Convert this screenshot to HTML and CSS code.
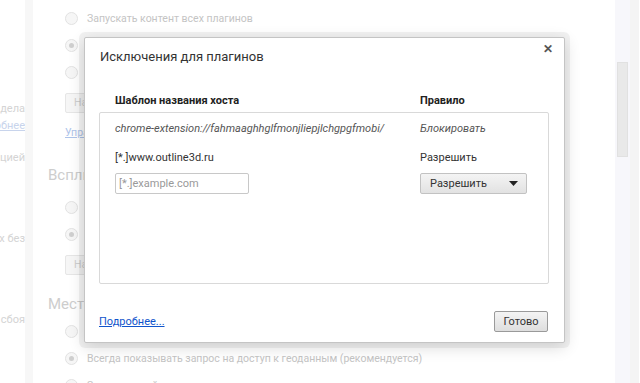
FILE: index.html
```html
<!DOCTYPE html>
<html lang="ru">
<head>
  <meta charset="UTF-8">
  <title>Настройки контента</title>
  <link rel="stylesheet" href="styles.css">
</head>
<body>

  <div class="page">
    <!-- Left column, cut by the window -->
    <div class="side">
      <div class="side-line" style="margin-top: 100px">Личные дела</div>
      <div class="side-line side-link">Подробнее</div>
      <div class="side-line" style="margin-top: 15px">геолокацией</div>
      <div class="side-line" style="margin-top: 64px">программах без</div>
      <div class="side-line" style="margin-top: 64px">в случае сбоя</div>
    </div>
    <div class="band"></div>

    <!-- Settings behind the dialog -->
    <div class="main">
      <div class="radio-row first"><span class="radio"></span>Запускать контент всех плагинов</div>
      <div class="radio-row"><span class="radio checked"></span>Нажмите, чтобы воспроизвести</div>
      <div class="radio-row"><span class="radio"></span>Блокировать все</div>
      <div class="btn-row"><span class="bg-button">Настроить исключения</span></div>
      <a class="bg-link">Управление отдельными плагинами...</a>

      <h3 class="section">Всплывающие окна</h3>
      <div class="radio-row"><span class="radio"></span>Разрешить открытие на всех сайтах</div>
      <div class="radio-row"><span class="radio checked"></span>Блокировать на всех сайтах</div>
      <div class="btn-row"><span class="bg-button">Настроить исключения</span></div>

      <h3 class="section second">Местоположение</h3>
      <div class="radio-row"><span class="radio"></span>Разрешить доступ к геоданным всем сайтам</div>
      <div class="radio-row"><span class="radio checked"></span>Всегда показывать запрос на доступ к геоданным (рекомендуется)</div>
      <div class="radio-row"><span class="radio"></span>Запретить сайтам доступ</div>
    </div>

    <div class="scrollbar">
      <div class="thumb"></div>
    </div>
    <div class="edge"></div>
  </div>

  <!-- Exceptions dialog -->
  <div class="dialog">
    <div class="dialog-head">
      <h2>Исключения для плагинов</h2>
      <span class="close">&#x2715;</span>
    </div>

    <div class="list-head">
      <span>Шаблон названия хоста</span>
      <span>Правило</span>
    </div>

    <div class="list">
      <div class="row policy">
        <span>chrome-extension://fahmaaghhglfmonjliepjlchgpgfmobi/</span>
        <span>Блокировать</span>
      </div>
      <div class="row">
        <span>[*.]www.outline3d.ru</span>
        <span>Разрешить</span>
      </div>
      <div class="row edit">
        <input class="host-input" type="text" placeholder="[*.]example.com">
        <div class="select">
          Разрешить
          <svg width="9" height="5" viewBox="0 0 9 5"><path d="M0 0h9L4.5 5z" fill="#222"/></svg>
        </div>
      </div>
    </div>

    <div class="dialog-foot">
      <a class="more">Подробнее...</a>
      <span class="done">Готово</span>
    </div>
  </div>

</body>
</html>
```

FILE: styles.css
```css
body {
  margin: 0;
  font-family: Roboto, 'Noto Sans', sans-serif;
  background: #fff;
  color: #333;
  overflow: hidden;
}

.page {
  display: flex;
  height: 383px;
  overflow: hidden;
}

/* Left column */
.side {
  width: 25px;
  overflow: hidden;
  font-size: 11px;
  color: #d4d4d4;
}

.side-line {
  display: flex;
  justify-content: flex-end;
  white-space: nowrap;
  line-height: 17px;
}

.side-link {
  color: #c8d4ec;
  text-decoration: underline;
}

.band {
  width: 8px;
  background: #f7f7f7;
}

/* Main settings */
.main {
  width: 567px;
  padding-left: 15px;
  font-size: 10.5px;
  color: #c4c4c4;
  overflow: hidden;
}

.radio-row {
  display: flex;
  align-items: center;
  height: 27px;
  padding-left: 17px;
  white-space: nowrap;
}

.radio-row.first {
  margin-top: 5px;
}

.radio {
  width: 11px;
  height: 11px;
  border: 1px solid #e2e2e2;
  border-radius: 50%;
  background: #f6f6f6;
  margin-right: 9px;
  flex: none;
  position: relative;
}

.radio.checked::after {
  content: '';
  position: absolute;
  left: 3px;
  top: 3px;
  width: 5px;
  height: 5px;
  border-radius: 50%;
  background: #cfcfcf;
}

.btn-row {
  padding: 7px 0 0 17px;
}

.bg-button {
  display: inline-block;
  height: 18px;
  line-height: 18px;
  padding: 0 8px;
  border: 1px solid #e6e6e6;
  border-radius: 2px;
  background: #f6f6f6;
  color: #cfcfcf;
}

.bg-link {
  display: block;
  margin: 12px 0 0 17px;
  line-height: 15px;
  color: #aec4ea;
  text-decoration: underline;
}

.section {
  margin: 26px 0 10px;
  font-size: 15px;
  font-weight: normal;
  color: #cdcdcd;
}

.section.second {
  margin-top: 20px;
  margin-bottom: 5px;
}

.scrollbar {
  width: 15px;
  background: #f7f7fb;
  padding-top: 62px;
}

.thumb {
  margin-left: 2px;
  width: 11px;
  height: 95px;
  background: #e9e9e9;
  border: 1px solid #e1e1e1;
  box-sizing: border-box;
}

.edge {
  width: 9px;
  background: #f4f4f4;
}

/* Dialog */
.dialog {
  position: absolute;
  left: 84px;
  top: 37px;
  width: 481px;
  height: 306px;
  box-sizing: border-box;
  background: #fff;
  border: 1px solid #c4c4c4;
  box-shadow: 0 0 0 5px rgba(0, 0, 0, 0.05), 0 4px 16px rgba(0, 0, 0, 0.16);
  border-radius: 2px;
  padding: 0 15px 0 14px;
  display: flex;
  flex-direction: column;
}

.dialog-head {
  display: flex;
  justify-content: space-between;
  align-items: flex-start;
  height: 50px;
}

.dialog-head h2 {
  margin: 11px 0 0 1px;
  font-size: 13px;
  font-weight: normal;
  color: #333;
}

.close {
  margin: 4px -4px 0 0;
  font-size: 12px;
  font-weight: bold;
  color: #555;
}

.list-head {
  display: grid;
  grid-template-columns: 305px 1fr;
  padding: 6px 0 0 16px;
  height: 18px;
  font-size: 11px;
  font-weight: bold;
  color: #222;
}

.list {
  height: 172px;
  border: 1px solid #d9d9d9;
  border-radius: 2px;
  padding: 1px 0 0 15px;
  box-sizing: border-box;
}

.row {
  display: grid;
  grid-template-columns: 305px 1fr;
  align-items: center;
  height: 29px;
  font-size: 11px;
  color: #333;
}

.row.policy {
  font-style: italic;
  color: #555;
}

.row.edit {
  height: 22px;
}

.host-input {
  width: 134px;
  height: 21px;
  box-sizing: border-box;
  border: 1px solid #c8c8c8;
  border-radius: 2px;
  padding: 0 3px;
  font-family: inherit;
  font-size: 11px;
  color: #333;
}

.host-input::placeholder {
  color: #999;
}

.select {
  width: 107px;
  height: 21px;
  box-sizing: border-box;
  border: 1px solid #c2c2c2;
  border-radius: 2px;
  background: linear-gradient(#f4f4f4, #e2e2e2);
  display: flex;
  align-items: center;
  justify-content: space-between;
  padding: 0 8px 0 9px;
  font-size: 11px;
  color: #333;
}

.dialog-foot {
  margin-top: auto;
  display: flex;
  justify-content: space-between;
  align-items: center;
  height: 31px;
  padding-bottom: 10px;
  box-sizing: border-box;
}

.more {
  font-size: 11px;
  color: #1155cc;
  text-decoration: underline;
}

.done {
  width: 54px;
  height: 21px;
  box-sizing: border-box;
  border: 1px solid #9a9a9a;
  border-radius: 2px;
  background: linear-gradient(#f4f4f4, #dedede);
  display: flex;
  align-items: center;
  justify-content: center;
  font-size: 11px;
  color: #333;
  margin-right: 1px;
}
```
